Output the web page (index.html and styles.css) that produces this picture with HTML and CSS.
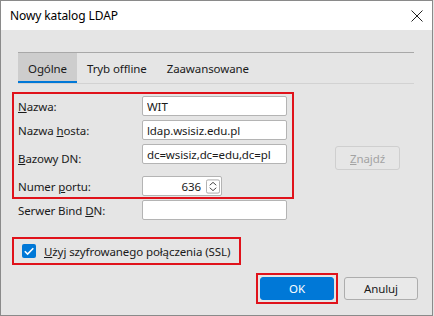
FILE: index.html
```html
<!DOCTYPE html>
<html lang="pl">
<head>
    <meta charset="UTF-8">
    <title>Nowy katalog LDAP</title>
    <link rel="stylesheet" href="styles.css">
</head>
<body>
<div class="window">
    <div class="titlebar">
        <span class="title">Nowy katalog LDAP</span>
        <svg class="close" width="12" height="12" viewBox="0 0 12 12">
            <path d="M0.5 0.5 L11.5 11.5 M11.5 0.5 L0.5 11.5" stroke="#222" stroke-width="1" fill="none"/>
        </svg>
    </div>

    <div class="content">
        <div class="tabs">
            <div class="tab active">Ogólne</div>
            <div class="tab">Tryb offline</div>
            <div class="tab">Zaawansowane</div>
        </div>

        <div class="top">
            <div class="mark fields">
                <label class="lbl"><u>N</u>azwa:</label>
                <input type="text" class="field" value="WIT">

                <label class="lbl">Nazwa <u>h</u>osta:</label>
                <input type="text" class="field" value="ldap.wsisiz.edu.pl">

                <label class="lbl"><u>B</u>azowy DN:</label>
                <input type="text" class="field top-field" value="dc=wsisiz,dc=edu,dc=pl">

                <label class="lbl">Numer <u>p</u>ortu:</label>
                <div class="port">
                    <input type="text" class="port-input" value="636">
                    <svg class="spin" width="17" height="17" viewBox="0 0 17 17">
                        <rect x="0.5" y="0.5" width="16" height="16" rx="2" fill="#fff" stroke="#9a9a9a"/>
                        <path d="M4.5 7 L8.5 3.5 L12.5 7" stroke="#444" stroke-width="1.2" fill="none"/>
                        <path d="M4.5 10 L8.5 13.5 L12.5 10" stroke="#444" stroke-width="1.2" fill="none"/>
                    </svg>
                </div>
            </div>
            <button class="btn find" disabled><u>Z</u>najdź</button>
        </div>

        <div class="bind">
            <label class="lbl">Serwer Bind <u>D</u>N:</label>
            <input type="text" class="field" value="">
        </div>

        <div class="mark ssl">
            <span class="check">
                <svg width="14" height="14" viewBox="0 0 14 14">
                    <path d="M2.8 7.2 L5.6 10 L11.3 4.2" stroke="#fff" stroke-width="1.6" fill="none"/>
                </svg>
            </span>
            <span class="ssl-text"><u>U</u>żyj szyfrowanego połączenia (SSL)</span>
        </div>

        <div class="actions">
            <div class="mark ok-wrap">
                <button class="btn primary">OK</button>
            </div>
            <button class="btn">Anuluj</button>
        </div>
    </div>
</div>
</body>
</html>
```

FILE: styles.css
```css
html, body {
  margin: 0;
  padding: 0;
}

body {
  font-family: "Noto Sans", "Open Sans", sans-serif;
  font-size: 11.5px;
  letter-spacing: -0.1px;
  color: #1a1a1a;
  background: #e5e5e5;
}

.window {
  box-sizing: border-box;
  width: 433px;
  height: 316px;
  border: 1px solid #8a8a8a;
  background: #e5e5e5;
}

.titlebar {
  height: 29px;
  background: #fff;
  display: flex;
  align-items: center;
  justify-content: space-between;
  padding: 0 9px 0 9px;
}

.title { font-size: 12px; color: #000; }
.close { margin-top: 1px; }

.content {
  padding-left: 11px;
}

/* tabs */
.tabs {
  display: flex;
  margin: 22px 18px 0 6px;
  border-top: 1px solid #a8a8a8;
  border-bottom: 1px solid #d2d2d2;
}

.tab {
  height: 30px;
  padding: 0 10px;
  display: flex;
  align-items: center;
  white-space: nowrap;
}

.tab.active {
  background: #cdcdcd;
  box-shadow: inset 0 -2px #0078d7;
}

/* red marks */
.mark {
  border: 2px solid #e0121b;
  box-sizing: border-box;
}

.top {
  display: flex;
  align-items: flex-start;
  margin-top: 8px;
}

.fields {
  width: 282px;
  padding: 2px 5px 1px 4px;
  display: grid;
  grid-template-columns: 124px 145px;
  grid-template-rows: 20px 20px 28px 20px;
  row-gap: 4px;
  align-items: center;
}

.lbl { white-space: nowrap; }

.field {
  box-sizing: border-box;
  width: 145px;
  height: 20px;
  margin: 0;
  border: 1px solid #b4b4b4;
  border-radius: 2px;
  padding: 0 4px;
  font: inherit;
  letter-spacing: inherit;
  color: #1a1a1a;
  background: #fff;
}

.top-field { align-self: start; }

.port {
  box-sizing: border-box;
  width: 80px;
  height: 20px;
  border: 1px solid #b4b4b4;
  border-radius: 2px;
  background: #fff;
  display: flex;
  align-items: center;
  padding-right: 1px;
}

.port-input {
  border: none;
  outline: none;
  width: 58px;
  padding: 0 3px 0 0;
  margin: 0;
  text-align: right;
  font: inherit;
  letter-spacing: inherit;
  color: #1a1a1a;
  background: transparent;
}

.spin { margin-left: 2px; }

.btn {
  box-sizing: border-box;
  width: 74px;
  height: 23px;
  margin: 0;
  font: inherit;
  letter-spacing: inherit;
  color: #1a1a1a;
  background: #e9e9e9;
  border: 1px solid #adadad;
  border-radius: 3px;
  padding: 0;
}

.find {
  width: 65px;
  height: 24px;
  margin: 54px 0 0 41px;
  color: #a3a3a3;
  border-color: #cfcfcf;
  background: #e6e6e6;
}

.primary {
  background: #0078d7;
  border-color: #0078d7;
  color: #fff;
}

.bind {
  display: grid;
  grid-template-columns: 124px 145px;
  align-items: center;
  padding-left: 6px;
  margin-top: 1px;
}

.ssl {
  width: 229px;
  height: 28px;
  margin-top: 17px;
  padding-left: 8px;
  display: flex;
  align-items: center;
  gap: 8px;
}

.ssl-text { white-space: nowrap; }

.check {
  width: 14px;
  height: 14px;
  background: #0078d7;
  border-radius: 2px;
  display: flex;
}

.actions {
  display: flex;
  justify-content: flex-end;
  align-items: center;
  gap: 6px;
  margin-top: 8px;
  padding-right: 14px;
}

.ok-wrap { padding: 2px; }
```
